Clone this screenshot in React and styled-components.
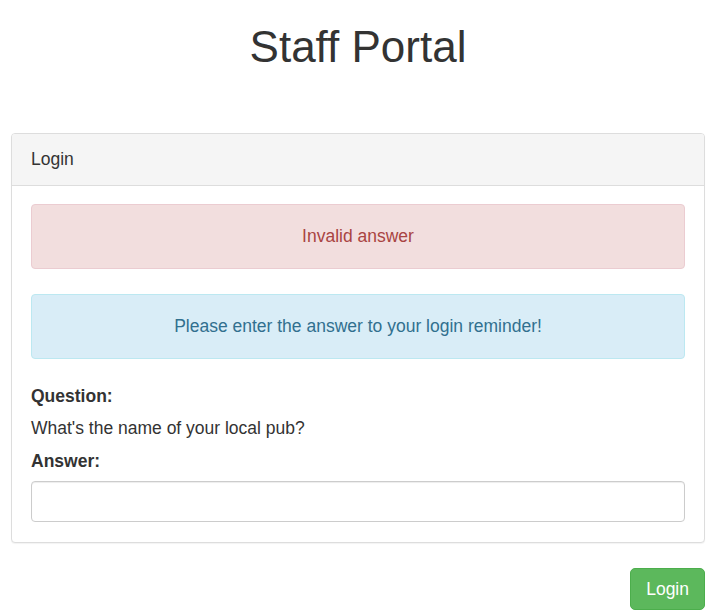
import React from 'react';
import styled, { createGlobalStyle } from 'styled-components';

const GlobalStyle = createGlobalStyle`
  body {
    margin: 0;
    background: #fff;
    font-family: "Liberation Sans", Arial, sans-serif;
    font-size: 17.5px;
    color: #333;
  }
`

const Page = styled.div`
  padding: 0 5px 0 11px;
`

const Title = styled.h1`
  margin: 25px 0 64px;
  font-size: 44px;
  line-height: 44px;
  font-weight: normal;
  text-align: center;
  color: #333;
`

const Panel = styled.div`
  border: 1px solid #ddd;
  border-radius: 4px;
  background: #fff;
  box-shadow: 0 1px 1px rgba(0, 0, 0, 0.05);
`

const PanelHeading = styled.div`
  padding: 13px 19px;
  line-height: 25px;
  background: #f5f5f5;
  border-bottom: 1px solid #ddd;
  border-radius: 3px 3px 0 0;
`

const PanelBody = styled.div`
  padding: 18px 19px 20px;
`

const Alert = styled.div`
  padding: 19px;
  line-height: 25px;
  text-align: center;
  border: 1px solid ${p => p.$kind === 'danger' ? '#ebccd1' : '#bce8f1'};
  background: ${p => p.$kind === 'danger' ? '#f2dede' : '#d9edf7'};
  color: ${p => p.$kind === 'danger' ? '#a94442' : '#31708f'};
  border-radius: 4px;
  margin-bottom: 25px;
`

const Label = styled.label`
  display: block;
  font-weight: bold;
  line-height: 25px;
`

const Text = styled.p`
  margin: 7px 0 8px;
  line-height: 25px;
`

const Input = styled.input`
  display: block;
  box-sizing: border-box;
  width: 100%;
  height: 41px;
  margin-top: 7px;
  padding: 8px 12px;
  font: inherit;
  border: 1px solid #ccc;
  border-radius: 4px;
  box-shadow: inset 0 1px 1px rgba(0, 0, 0, 0.075);
`

const Actions = styled.div`
  display: flex;
  justify-content: flex-end;
  margin-top: 25px;
`

const Button = styled.button`
  height: 42px;
  padding: 0 15px;
  font-family: "Liberation Sans", Arial, sans-serif;
  font-size: 17.5px;
  color: #fff;
  background: #5cb85c;
  border: 1px solid #4cae4c;
  border-radius: 5px;
  cursor: pointer;
`

export default function App() {
  return (
    <Page>
      <GlobalStyle />
      <Title>Staff Portal</Title>
      <Panel>
        <PanelHeading>Login</PanelHeading>
        <PanelBody>
          <Alert $kind="danger">Invalid answer</Alert>
          <Alert $kind="info">Please enter the answer to your login reminder!</Alert>
          <Label>Question:</Label>
          <Text>What's the name of your local pub?</Text>
          <Label>Answer:</Label>
          <Input type="text" />
        </PanelBody>
      </Panel>
      <Actions>
        <Button>Login</Button>
      </Actions>
    </Page>
  );
}
